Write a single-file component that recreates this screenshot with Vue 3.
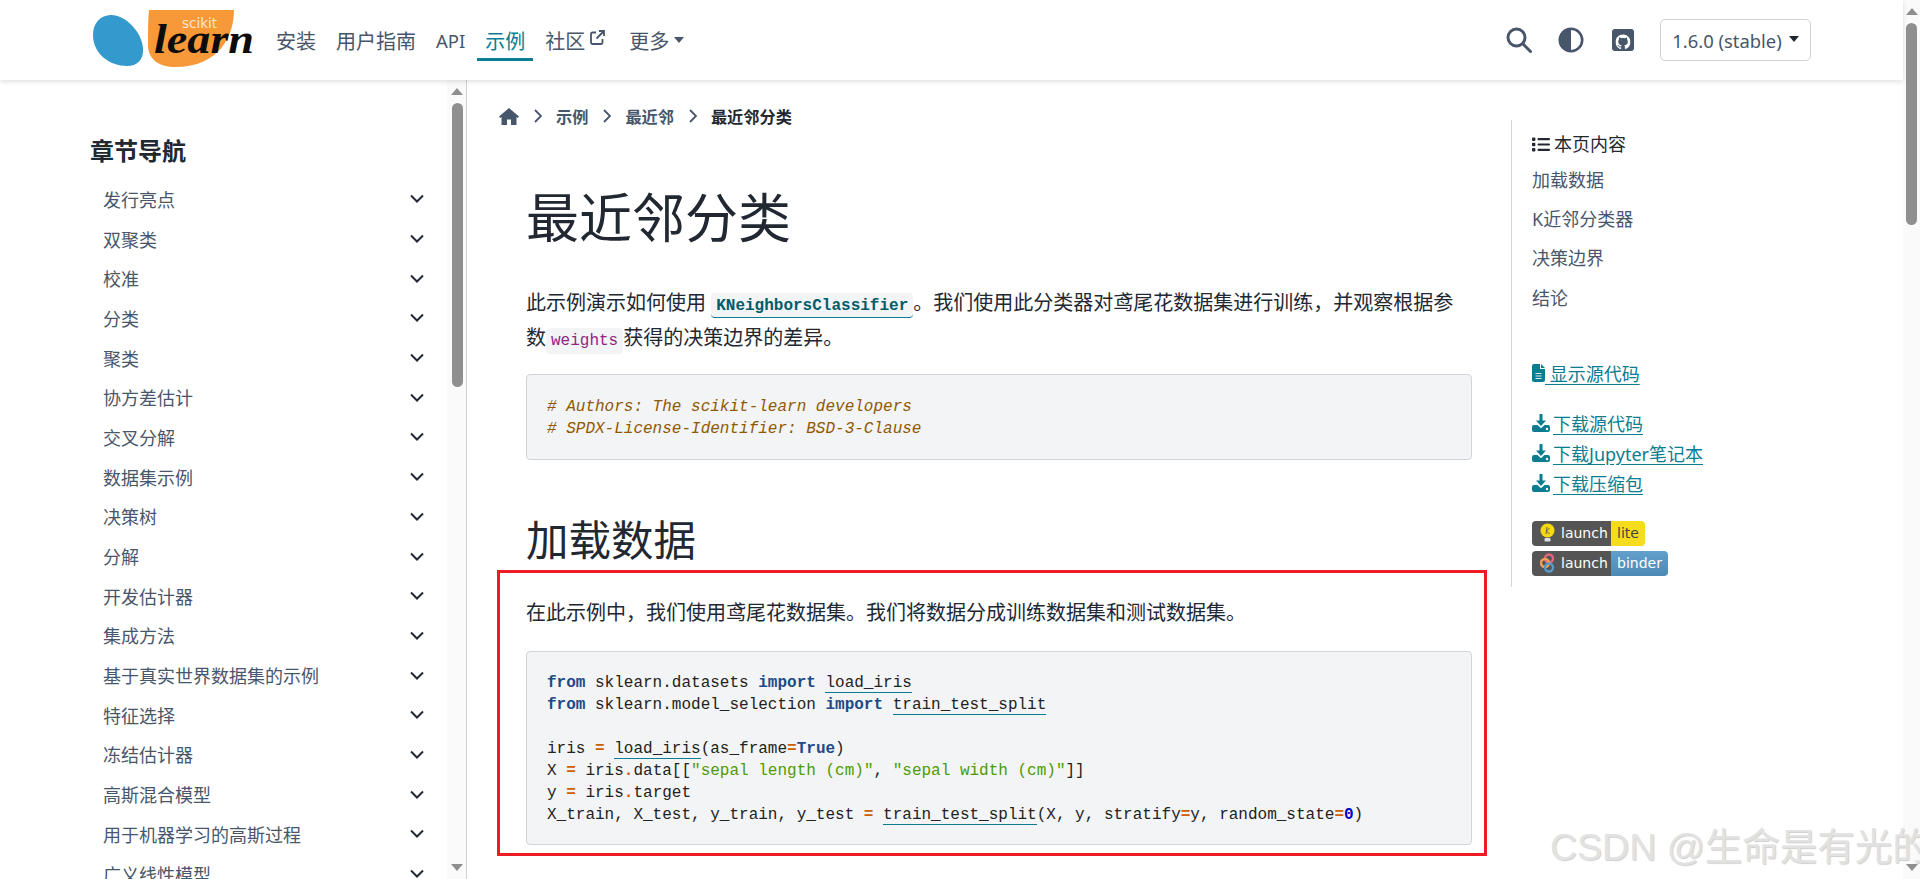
<script setup>
const navItems = ['发行亮点','双聚类','校准','分类','聚类','协方差估计','交叉分解','数据集示例','决策树','分解','开发估计器','集成方法','基于真实世界数据集的示例','特征选择','冻结估计器','高斯混合模型','用于机器学习的高斯过程','广义线性模型']
const tocItems = ['加载数据','K近邻分类器','决策边界','结论']
const downloads = ['下载源代码','下载Jupyter笔记本','下载压缩包']
const octocat = 'M8 0C3.58 0 0 3.58 0 8c0 3.54 2.29 6.53 5.47 7.59.4.07.55-.17.55-.38 0-.19-.01-.82-.01-1.49-2.01.37-2.53-.49-2.69-.94-.09-.23-.48-.94-.82-1.13-.28-.15-.68-.52-.01-.53.63-.01 1.08.58 1.23.82.72 1.21 1.87.87 2.33.66.07-.52.28-.87.51-1.07-1.78-.2-3.64-.89-3.64-3.95 0-.87.31-1.59.82-2.15-.08-.2-.36-1.02.08-2.12 0 0 .67-.21 2.2.82.64-.18 1.32-.27 2-.27.68 0 1.36.09 2 .27 1.53-1.04 2.2-.82 2.2-.82.44 1.1.16 1.92.08 2.12.51.56.82 1.27.82 2.15 0 3.07-1.87 3.75-3.65 3.95.29.25.54.73.54 1.48 0 1.07-.01 1.93-.01 2.2 0 .21.15.46.55.38A8.013 8.013 0 0016 8c0-4.42-3.58-8-8-8z'
</script>

<template>
  <div class="page">
    <div class="column">
      <header class="header">
        <svg class="logo" width="166" height="60" viewBox="0 0 166 60">
          <path d="M20 5C35 4 52 22 53 38C54 50 47 56 37 56C20 56 3 44 3 25C3 13 10 6 20 5Z" fill="#3499cd"/>
          <path d="M59 0L144 0C144 25 130 57 85 57C70 57 58 50 58 35C58 20 58 10 59 0Z" fill="#f89939"/>
          <text x="92" y="18" class="logo-small">scikit</text>
          <text x="64" y="43" class="logo-big" textLength="100" lengthAdjust="spacingAndGlyphs">learn</text>
        </svg>
        <nav class="topnav">
          <a class="topitem">安装</a>
          <a class="topitem">用户指南</a>
          <a class="topitem api">API</a>
          <a class="topitem active">示例</a>
          <a class="topitem">社区
            <svg class="ext" width="15" height="15" viewBox="0 0 15 15" fill="none" stroke="#48566b" stroke-width="1.8">
              <path d="M6 2.5H2.5A1.5 1.5 0 0 0 1 4V12.5A1.5 1.5 0 0 0 2.5 14H11A1.5 1.5 0 0 0 12.5 12.5V9"/>
              <path d="M9 1H14V6M14 1L6.5 8.5"/>
            </svg>
          </a>
          <a class="topitem more">更多<span class="caret muted"></span></a>
        </nav>
        <div class="tools">
          <svg width="26" height="26" viewBox="0 0 26 26" fill="none" stroke="#48566b" stroke-width="3">
            <circle cx="10.5" cy="10.5" r="8.5"/><path d="M17 17L24.5 24.5" stroke-linecap="round"/>
          </svg>
          <svg class="contrast" width="26" height="26" viewBox="0 0 26 26">
            <circle cx="13" cy="13" r="11.2" fill="#fff" stroke="#48566b" stroke-width="2.6"/>
            <path d="M13 1A12 12 0 0 0 13 25Z" fill="#48566b"/>
          </svg>
          <svg class="gh" width="22" height="22" viewBox="0 0 22 22">
            <rect width="22" height="22" rx="3" fill="#48566b"/>
            <svg x="3.5" y="4" width="15" height="18" viewBox="0 0 16 16"><path :d="octocat" fill="#fff"/></svg>
          </svg>
          <button class="version">1.6.0 (stable)<span class="caret dark"></span></button>
        </div>
      </header>

      <div class="body">
        <aside class="sidebar">
          <div class="sidenav">
            <div class="sidetitle">章节导航</div>
            <div v-for="item in navItems" :key="item" class="siderow">
              <span>{{ item }}</span>
              <svg width="14" height="9" viewBox="0 0 14 9" fill="none" stroke="#222832" stroke-width="2"><path d="M1 1.5L7 7.5L13 1.5"/></svg>
            </div>
          </div>
          <div class="sidescroll">
            <span class="arrow up"></span>
            <span class="sidethumb"></span>
            <span class="spacer"></span>
            <span class="arrow down"></span>
          </div>
        </aside>

        <main class="main">
          <div class="article-col">
            <div class="crumbs">
              <svg width="20" height="17" viewBox="0 0 20 17" fill="#48566b"><path d="M10 0L20 8.6L18.7 10L17.5 9V17H12V11.5H8V17H2.5V9L1.3 10L0 8.6Z"/></svg>
              <svg class="cv" width="8" height="14" viewBox="0 0 8 14" fill="none" stroke="#48566b" stroke-width="1.8"><path d="M1 1L7 7L1 13"/></svg>
              <span>示例</span>
              <svg class="cv" width="8" height="14" viewBox="0 0 8 14" fill="none" stroke="#48566b" stroke-width="1.8"><path d="M1 1L7 7L1 13"/></svg>
              <span>最近邻</span>
              <svg class="cv" width="8" height="14" viewBox="0 0 8 14" fill="none" stroke="#48566b" stroke-width="1.8"><path d="M1 1L7 7L1 13"/></svg>
              <span class="crumb-last">最近邻分类</span>
            </div>
            <article class="article">
              <h1>最近邻分类</h1>
              <p class="p1">此示例演示如何使用 <code class="ref">KNeighborsClassifier</code>。我们使用此分类器对鸢尾花数据集进行训练，并观察根据参数<code class="lit">weights</code>获得的决策边界的差异。</p>
              <pre class="code first"><span class="c"># Authors: The scikit-learn developers
# SPDX-License-Identifier: BSD-3-Clause</span></pre>
              <h2>加载数据</h2>
              <p class="p2">在此示例中，我们使用鸢尾花数据集。我们将数据分成训练数据集和测试数据集。</p>
              <pre class="code"><span class="k">from</span> sklearn.datasets <span class="k">import</span> <a class="l">load_iris</a>
<span class="k">from</span> sklearn.model_selection <span class="k">import</span> <a class="l">train_test_split</a>

iris <span class="o">=</span> <a class="l">load_iris</a>(as_frame<span class="o">=</span><span class="k">True</span>)
X <span class="o">=</span> iris<span class="o">.</span>data[[<span class="s">"sepal length (cm)"</span>, <span class="s">"sepal width (cm)"</span>]]
y <span class="o">=</span> iris<span class="o">.</span>target
X_train, X_test, y_train, y_test <span class="o">=</span> <a class="l">train_test_split</a>(X, y, stratify<span class="o">=</span>y, random_state<span class="o">=</span><span class="n">0</span>)</pre>
            </article>
          </div>

          <aside class="toc">
            <div class="toc-head">
              <svg width="18" height="15" viewBox="0 0 18 15" fill="#222832">
                <rect x="0" y="0.5" width="3.4" height="3.4" rx="1"/><rect x="0" y="5.8" width="3.4" height="3.4" rx="1"/><rect x="0" y="11.1" width="3.4" height="3.4" rx="1"/>
                <rect x="5.5" y="1.1" width="12.5" height="2.2" rx="1"/><rect x="5.5" y="6.4" width="12.5" height="2.2" rx="1"/><rect x="5.5" y="11.7" width="12.5" height="2.2" rx="1"/>
              </svg>
              <span>本页内容</span>
            </div>
            <a v-for="t in tocItems" :key="t" class="toc-item">{{ t }}</a>
            <a class="toc-link source">
              <svg width="13" height="18" viewBox="0 0 13 18"><path d="M2 0H8V5H13V16A2 2 0 0 1 11 18H2A2 2 0 0 1 0 16V2A2 2 0 0 1 2 0ZM9 0L13 4H9Z" fill="#0a7d91"/><path d="M3.5 9.5H9.5M3.5 12H9.5M3.5 14.5H9.5" stroke="#d5eaee" stroke-width="1.2"/></svg><span class="u"> 显示源代码</span>
            </a>
            <div class="downloads">
              <a v-for="d in downloads" :key="d" class="toc-link">
                <svg width="18" height="18" viewBox="0 0 18 18"><path d="M7.5 0H10.5V6.5H14L9 12L4 6.5H7.5Z" fill="#0a7d91"/><path d="M2 11H5.5L9 14.3L12.5 11H16A2 2 0 0 1 18 13V16A2 2 0 0 1 16 18H2A2 2 0 0 1 0 16V13A2 2 0 0 1 2 11Z" fill="#0a7d91"/><circle cx="15" cy="15" r="1.2" fill="#fff"/></svg><span class="u dl">{{ d }}</span>
              </a>
            </div>
            <div class="badges">
              <div class="badge">
                <span class="b-left">
                  <svg width="15" height="20" viewBox="0 0 15 20"><circle cx="7.5" cy="7.5" r="7" fill="#f5d90a"/><rect x="4.5" y="15" width="6" height="3.5" rx="1" fill="#ddd"/><path d="M7 4L6 11M9.5 5L6.5 8L9.5 11" stroke="#665" stroke-width="1" fill="none"/></svg>
                  <span>launch</span>
                </span>
                <span class="b-right lite">lite</span>
              </div>
              <div class="badge">
                <span class="b-left">
                  <svg width="15" height="20" viewBox="0 0 15 20" fill="none" stroke-width="2.4"><circle cx="9" cy="5.5" r="4" stroke="#e66581"/><circle cx="5" cy="10" r="4" stroke="#f5a252"/><circle cx="9" cy="14.5" r="4" stroke="#579aca"/></svg>
                  <span>launch</span>
                </span>
                <span class="b-right binder">binder</span>
              </div>
            </div>
          </aside>
        </main>
      </div>
    </div>

    <div class="pagescroll">
      <span class="arrow up"></span>
      <span class="pagethumb"></span>
      <span class="spacer"></span>
      <span class="arrow down"></span>
    </div>

    <div class="redbox"></div>
    <div class="watermark">CSDN @生命是有光的</div>
  </div>
</template>

<style scoped>
.page {
  position: relative;
  display: flex;
  width: 1920px;
  height: 879px;
  overflow: hidden;
  background: #fff;
  color: #222832;
  font-family: "Noto Sans", "Noto Sans CJK SC", sans-serif;
  font-size: 20px;
}
.column { width: 1903px; display: flex; flex-direction: column; }
.header {
  position: relative;
  z-index: 2;
  flex: none;
  height: 80px;
  display: flex;
  align-items: flex-start;
  padding-left: 90px;
  background: #fff;
  box-shadow: 0 2px 5px rgba(0,0,0,.12);
}
.logo { margin-top: 10px; flex: none; }
.logo-small { font-family: "DejaVu Sans", sans-serif; font-size: 13.5px; fill: #fbe6cd; }
.logo-big { font-family: "Liberation Serif", serif; font-style: italic; font-weight: 700; font-size: 42px; fill: #0c0c0c; }
.topnav { display: flex; gap: 4px; margin-left: 12px; color: #48566b; }
.topitem {
  display: flex;
  align-items: center;
  height: 61px;
  padding: 22px 8px 0;
  font-size: 20px;
  border-bottom: 3px solid transparent;
  box-sizing: border-box;
  white-space: nowrap;
}
.topitem.api { font-size: 18.5px; }
.topitem.active { color: #0a7d91; border-bottom-color: #0a7d91; }
.ext { margin-left: 5px; margin-top: -6px; }
.more { margin-left: 4px; }
.caret { display: inline-block; width: 0; height: 0; border-left: 5.5px solid transparent; border-right: 5.5px solid transparent; margin-left: 5px; }
.caret.muted { border-top: 6px solid #48566b; }
.caret.dark { border-top: 6px solid #222832; margin-left: 7px; margin-top: -2px; }
.tools {
  margin-left: auto;
  margin-right: 92px;
  height: 80px;
  display: flex;
  align-items: center;
}
.contrast { margin-left: 26px; }
.gh { margin-left: 28px; }
.version {
  margin-left: 26px;
  width: 151px;
  height: 42px;
  display: flex;
  align-items: center;
  justify-content: center;
  background: #fff;
  border: 1px solid #ced4da;
  border-radius: 5px;
  font-family: inherit;
  font-size: 18.4px;
  color: #48566b;
  padding: 0;
}
.body { flex: 1; min-height: 0; display: flex; }
.sidebar {
  flex: none;
  width: 467px;
  box-sizing: border-box;
  border-right: 1px solid #d1d5da;
  display: flex;
  overflow: hidden;
}
.sidenav { width: 447px; flex: none; padding-top: 56px; box-sizing: border-box; }
.sidetitle { margin-left: 90px; height: 30px; line-height: 30px; font-size: 24px; font-weight: 700; margin-bottom: 13px; }
.siderow {
  height: 39.7px;
  display: flex;
  align-items: center;
  justify-content: space-between;
  padding: 0 23px 0 103px;
  font-size: 18px;
  color: #48566b;
}
.siderow svg { flex: none; }
.sidescroll {
  flex: 1;
  display: flex;
  flex-direction: column;
  align-items: center;
  background: #fafafa;
  padding: 8px 0 8px 1px;
  box-sizing: border-box;
}
.sidethumb { width: 11px; height: 284px; margin-top: 8px; border-radius: 6px; background: #8f8f8f; }
.spacer { flex: 1; }
.arrow { width: 0; height: 0; border-left: 6.5px solid transparent; border-right: 6.5px solid transparent; }
.arrow.up { border-bottom: 7px solid #8f8f8f; }
.arrow.down { border-top: 7px solid #8f8f8f; }
.main { flex: 1; display: flex; min-width: 0; }
.article-col { width: 1004px; flex: none; padding-left: 32px; box-sizing: border-box; }
.crumbs {
  height: 24px;
  margin-top: 24px;
  display: flex;
  align-items: center;
  color: #48566b;
}
.cv { margin: 0 14px 0 15px; }
.crumbs span { font-size: 16.2px; font-weight: 600; }
.crumbs .crumb-last { color: #222832; }
.article { margin-left: 27px; width: 946px; }
h1 { margin: 55px 0 0; font-size: 53px; font-weight: 400; line-height: 70px; }
h2 { margin: 52px 0 0; font-size: 42.5px; font-weight: 400; line-height: 56px; }
.p1 { margin: 31.5px 0 0; line-height: 35px; }
.p2 { margin: 27px 0 0; line-height: 35px; }
code {
  font-family: "Liberation Mono", monospace;
  font-size: 16px;
  line-height: 1;
  background: #f3f4f5;
  border-radius: 4px;
  padding: 4px 5px;
}
.ref { color: #005b6b; font-weight: 700; border-bottom: 1px solid #0a7d91; padding-bottom: 2px; }
.lit { color: #912583; }
.code {
  margin: 21px 0 0;
  padding: 19.5px 20px 18.5px;
  background: #f3f4f5;
  border: 1px solid #d1d5da;
  border-radius: 4px;
  font-family: "Liberation Mono", monospace;
  font-size: 16px;
  line-height: 22px;
  color: #222;
}
.code.first { margin-top: 19.5px; padding: 20.5px 20px 19.5px; }
.c { color: #8f5902; font-style: italic; }
.k { color: #204a87; font-weight: 700; }
.o { color: #ce5c00; font-weight: 700; }
.s { color: #4e9a06; }
.n { color: #0000cf; font-weight: 700; }
.l { border-bottom: 1px solid #0a7d91; }
.toc {
  margin-top: 40px;
  margin-left: 40px;
  height: 467px;
  box-sizing: border-box;
  width: 300px;
  padding: 12px 0 0 20px;
  border-left: 1px solid #d1d5da;
  font-size: 18px;
  display: flex;
  flex-direction: column;
  align-items: flex-start;
}
.toc-head { height: 24px; display: flex; align-items: center; gap: 4px; margin-bottom: 4.8px; line-height: 24px; }
.toc-item { height: 39.3px; line-height: 39.3px; color: #48566b; }
.toc-link { height: 30px; display: flex; align-items: center; color: #0a7d91; white-space: pre; }
.source { margin-top: 40px; }
.u { text-decoration: underline; text-underline-offset: 3px; }
.dl { padding-left: 3px; }
.downloads { margin-top: 20px; display: flex; flex-direction: column; }
.badges { margin-top: 23px; display: flex; flex-direction: column; align-items: flex-start; gap: 5px; }
.badge { display: flex; height: 25px; border-radius: 4px; overflow: hidden; font-family: "DejaVu Sans", sans-serif; font-size: 14px; line-height: 25px; }
.b-left { width: 79px; display: flex; align-items: center; gap: 6px; padding-left: 8px; box-sizing: border-box; background: #555; color: #fff; }
.b-right { padding: 0 7px; }
.lite { background: #f5dd1d; color: #444; width: 34px; padding: 0; text-align: center; }
.binder { background: linear-gradient(#63a0cc, #4c8ab5); color: #fff; width: 57px; padding: 0; text-align: center; }
.pagescroll {
  flex: none;
  width: 17px;
  display: flex;
  flex-direction: column;
  align-items: center;
  background: #fafafa;
  padding: 8px 0;
  box-sizing: border-box;
}
.pagethumb { width: 11px; height: 202px; margin-top: 8px; border-radius: 6px; background: #8f8f8f; }
.redbox {
  position: absolute;
  left: 497px;
  top: 570px;
  width: 990px;
  height: 286px;
  box-sizing: border-box;
  border: 3px solid #ee1c25;
}
.watermark {
  position: absolute;
  left: 1550px;
  top: 822px;
  white-space: nowrap;
  font-family: "Liberation Sans", "Noto Sans CJK SC", sans-serif;
  font-size: 37.5px;
  line-height: 50px;
  color: #e2e2e2;
  text-shadow: 1px 1px 1px #cfcfcf;
}
</style>

<style>
html, body { margin: 0; overflow: hidden; }
</style>
